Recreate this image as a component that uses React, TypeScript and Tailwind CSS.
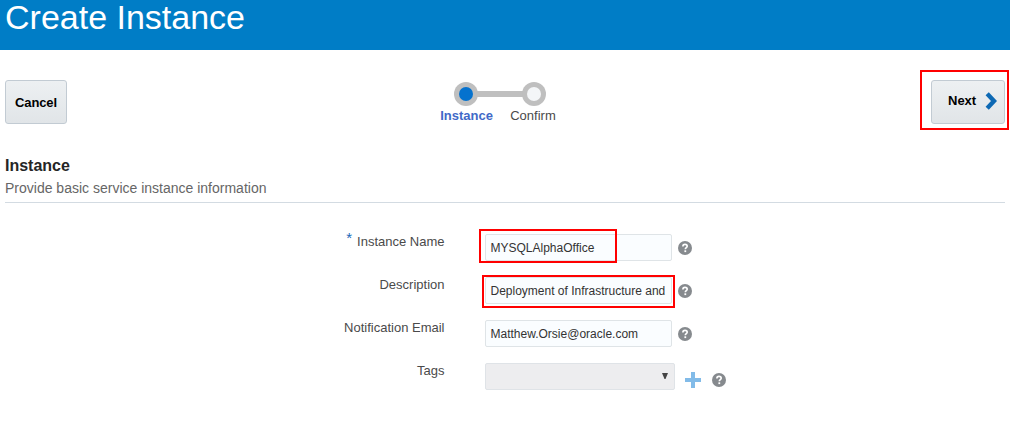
import type { ReactNode } from "react";

function HelpIcon() {
  return (
    <svg className="block h-3.5 w-3.5 shrink-0" viewBox="0 0 14 14" aria-hidden="true">
      <circle cx="7" cy="7" r="7" fill="#868a8e" />
      <path
        d="M4.9 5.4C4.9 4 5.8 3.4 7 3.4s2.2.7 2.2 1.8c0 1.4-1.9 1.5-1.9 3.1"
        fill="none"
        stroke="#fff"
        strokeWidth="1.6"
      />
      <rect x="6.4" y="9.3" width="1.8" height="1.8" fill="#fff" />
    </svg>
  );
}

function Stepper() {
  return (
    <div className="flex w-[136px] flex-col items-center">
      <div className="flex items-center">
        <div className="flex h-6 w-6 items-center justify-center rounded-full bg-[#bfbfbf]">
          <div className="h-3.5 w-3.5 rounded-full bg-[#0572ce]" />
        </div>
        <div className="-mx-px h-1.5 w-[46px] bg-[#bfbfbf]" />
        <div className="flex h-6 w-6 items-center justify-center rounded-full bg-[#bfbfbf]">
          <div className="h-3.5 w-3.5 rounded-full bg-[#f4f6f8]" />
        </div>
      </div>
      <div className="mt-0.5 grid w-[136px] grid-cols-2 text-center text-[13px] leading-[15px]">
        <span className="pl-px font-bold text-[#4169c8]">Instance</span>
        <span className="pr-0.5 text-[#4a4a4a]">Confirm</span>
      </div>
    </div>
  );
}

function Row({ label, required, children }: { label: string; required?: boolean; children: ReactNode }) {
  return (
    <div className="flex h-[27px] items-start">
      <div className="flex w-[444.5px] justify-end text-[13px] leading-[15px] text-[#4a4a4a]">
        {required && <span className="-mt-1 mr-[5px] text-[15px] text-[#1b68b8]">*</span>}
        <span>{label}</span>
      </div>
      <div className="ml-[40.5px] flex">{children}</div>
    </div>
  );
}

function Field({ value, highlight }: { value: string; highlight?: string }) {
  return (
    <>
      <div className="relative flex h-[27px] w-[187px] items-center rounded-xs border border-[#dfe4e7] bg-[#fafdff] pl-[4.5px] text-xs whitespace-nowrap text-[#333]">
        {value}
        {highlight && <div className={`absolute border-2 border-[#ff0000] ${highlight}`} />}
      </div>
      <div className="mt-[7px] ml-1.5">
        <HelpIcon />
      </div>
    </>
  );
}

export default function App() {
  return (
    <div className="h-[422px] w-[1010px] overflow-hidden bg-white font-['Liberation_Sans',Arial,sans-serif]">
      <header className="flex h-[50px] items-start bg-[#007dc6] pl-[5px]">
        <h1 className="text-[34px] leading-[34px] text-white">Create Instance</h1>
      </header>

      <div className="mt-5 flex h-[60px] items-start justify-between pr-px pl-[5px]">
        <button className="mt-2.5 h-11 w-[62px] rounded-[3px] border border-[#c2cbd3] bg-linear-to-b from-[#edf0f2] to-[#e1e5e8] pt-0.5 text-[13px] font-bold tracking-[-0.1px] text-black">
          Cancel
        </button>
        <div className="mt-3 ml-[13px]">
          <Stepper />
        </div>
        <div className="flex h-[60px] w-[89px] border-2 border-[#ff0000] pt-2 pl-[9px]">
          <button className="flex h-11 w-[74px] items-center rounded-[3px] border border-[#c2cbd3] bg-linear-to-b from-[#edf0f2] to-[#e1e5e8] pl-4 text-[13px] font-bold text-black">
            <span className="-mt-[3px]">Next</span>
            <svg className="-mt-0.5 ml-[9px] h-[18px] w-3" viewBox="0 0 12 18" aria-hidden="true">
              <path d="M2.2 1.8 9 9l-6.8 7.2" fill="none" stroke="#0d69b4" strokeWidth="4.4" />
            </svg>
          </button>
        </div>
      </div>

      <section className="mx-[5px] mt-[26px] h-[47px] border-b border-[#d3dbe2]">
        <h2 className="text-base leading-[19px] font-bold text-[#252525]">Instance</h2>
        <p className="mt-[5px] text-sm leading-4 text-[#666]">Provide basic service instance information</p>
      </section>

      <main className="mt-[31px] flex flex-col gap-4">
        <Row label="Instance Name" required>
          <Field value="MYSQLAlphaOffice" highlight="-top-1.5 -left-[7px] h-[34px] w-[138px]" />
        </Row>
        <Row label="Description">
          <Field value="Deployment of Infrastructure and" highlight="-top-[3px] -left-1 h-[33px] w-[193px]" />
        </Row>
        <Row label="Notification Email">
          <Field value="Matthew.Orsie@oracle.com" />
        </Row>
        <Row label="Tags">
          <div className="flex h-[27px] w-[190px] justify-end rounded-xs border border-[#dfe3e7] bg-[#ededef] pt-[9px] pr-1.5">
            <svg className="h-1.5 w-1.5" viewBox="0 0 6 6" aria-hidden="true">
              <path d="M0 0h6L3.5 6h-1z" fill="#444" />
            </svg>
          </div>
          <svg className="mt-[9px] ml-2.5 h-4 w-4" viewBox="0 0 16 16" aria-hidden="true">
            <path d="M6 0h4v6h6v4h-6v6H6v-6H0V6h6z" fill="#82bbe8" />
          </svg>
          <div className="mt-2.5 ml-[11px]">
            <HelpIcon />
          </div>
        </Row>
      </main>
    </div>
  );
}
